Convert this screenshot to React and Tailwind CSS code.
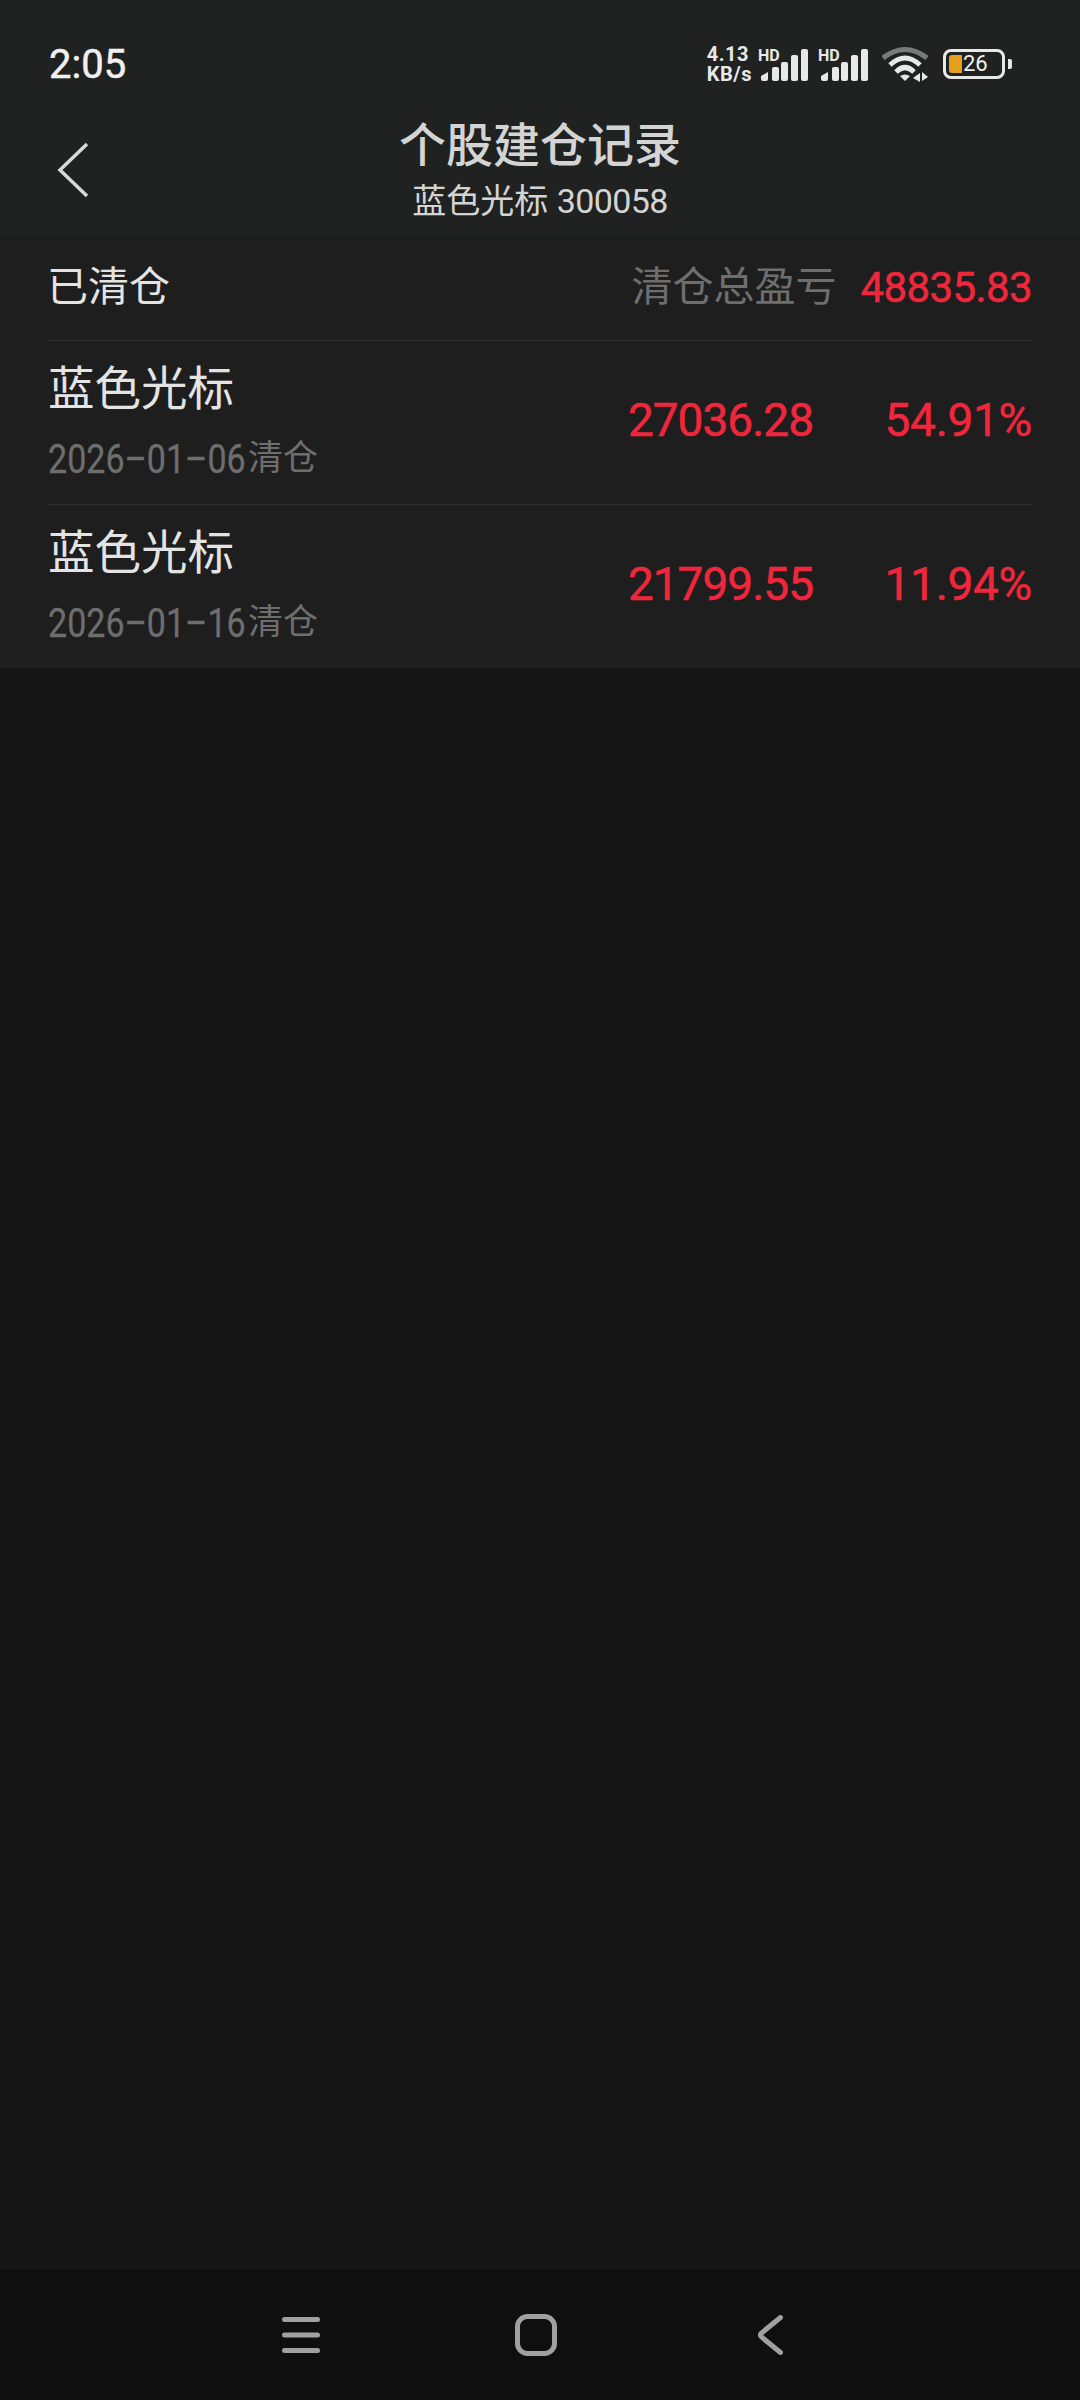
import React from 'react';

function Signal() {
  return (
    <svg width="50" height="36" viewBox="0 0 50 36" className="block">
      <text x="0" y="15" fontSize="16" fontWeight="700" fill="#e8e8e8" fontFamily="Roboto, sans-serif">HD</text>
      <g fill="#e8e8e8">
        <path d="M3 33V30L10 26V33Q10 35 8 35H5Q3 35 3 33Z" />
        <rect x="14" y="21" width="7" height="14" rx="2" />
        <rect x="23" y="16" width="7" height="19" rx="2" />
        <rect x="33" y="9" width="7" height="26" rx="2" />
        <rect x="43" y="3" width="7" height="32" rx="2" />
      </g>
    </svg>
  );
}

function Wifi() {
  return (
    <svg width="46" height="36" viewBox="0 0 46 36" fill="none" className="block">
      <path d="M1 12Q23 -5 45 12" stroke="#7a7a7a" strokeWidth="5" />
      <path d="M8 19Q23 5 38 19" stroke="#e8e8e8" strokeWidth="5" />
      <path d="M14 26Q23 17 32 26" stroke="#e8e8e8" strokeWidth="5" />
      <path d="M18 30Q23 27 28 30L23 35Z" fill="#e8e8e8" />
      <path d="M38 27V36L31 32Z" fill="#e8e8e8" />
      <path d="M40 26V35L46 31Z" fill="#e8e8e8" />
    </svg>
  );
}

function Battery() {
  return (
    <div className="flex items-center gap-[3px]">
      <div className="flex h-[30px] w-[62px] items-center rounded-[8px] border-[3px] border-[#e8e8e8] pl-[3px]">
        <div className="h-[18px] w-[13px] rounded-l-[3px] bg-[#e5a020]" />
        <span className="ml-[1px] text-[22px] leading-none text-[#f0f0f0]">26</span>
      </div>
      <div className="h-[10px] w-[4px] rounded-r-[2px] bg-[#e8e8e8]" />
    </div>
  );
}

function Row({ date, amount, percent }) {
  return (
    <div className="mx-[48px] flex h-[164px] items-center border-t border-[#2e2e2e]">
      <div className="flex flex-col pb-[3px]">
        <span className="text-[46.5px] leading-[56px] text-[#e4e4e4]">蓝色光标</span>
        <span className="mt-[20px] flex items-center text-[35px] leading-[44px] text-[#6e6e6e]">
          <span className="inline-block w-[200px] origin-left scale-x-[0.83] text-[41px] whitespace-nowrap [-webkit-text-stroke:0.3px_#6e6e6e]">{date}</span>
          清仓
        </span>
      </div>
      <span className="mb-[5px] ml-auto text-[46px] leading-none tracking-[-1px] text-[#f0273c] [-webkit-text-stroke:0.5px_#f0273c]">{amount}</span>
      <span className="mb-[5px] w-[219px] text-right text-[46px] leading-none tracking-[-0.3px] text-[#f0273c] [-webkit-text-stroke:0.5px_#f0273c]">{percent}</span>
    </div>
  );
}

export default function App() {
  return (
    <div className="flex h-[2400px] w-[1080px] flex-col overflow-hidden bg-[#161616] [font-family:Roboto,'Noto_Sans_CJK_SC',sans-serif]">
      <div className="h-[235px] bg-[#202222]">
        <div className="flex h-[100px] items-center pt-[28px] pr-[68px] pl-[49px]">
          <span className="mt-[2px] text-[40px] leading-none text-[#f0f0f0] [-webkit-text-stroke:0.5px_#f0f0f0]">2:05</span>
          <div className="ml-auto flex items-center">
            <div className="flex flex-col text-[20px] leading-[20px] font-bold tracking-[0.5px] text-[#e8e8e8]">
              <span>4.13</span>
              <span>KB/s</span>
            </div>
            <div className="ml-[6px] flex gap-[10px]">
              <Signal />
              <Signal />
            </div>
            <div className="mr-[15px] ml-[14px]">
              <Wifi />
            </div>
            <Battery />
          </div>
        </div>
        <div className="relative flex h-[135px] flex-col items-center pt-[17px]">
          <svg width="32" height="56" viewBox="0 0 32 56" fill="none" className="absolute top-[42px] left-[57px]">
            <path d="M30 2L3 28L30 54" stroke="#d8d8d8" strokeWidth="3.5" />
          </svg>
          <span className="text-[47px] leading-[58px] font-medium text-[#d4d4d4]">个股建仓记录</span>
          <span className="mt-[4px] text-[34px] leading-[44px] text-[#d4d4d4]">
            蓝色光标 <span className="tracking-[-0.6px]">300058</span>
          </span>
        </div>
      </div>

      <div className="h-[433px] bg-[#1e1e1e]">
        <div className="mx-[48px] flex h-[105px] items-center">
          <span className="-ml-[1px] text-[41px] leading-none text-[#e4e4e4]">已清仓</span>
          <span className="ml-auto text-[41px] leading-none text-[#6e6e6e]">清仓总盈亏</span>
          <span className="ml-[24px] text-[42px] leading-none tracking-[-0.6px] text-[#f0273c] [-webkit-text-stroke:0.5px_#f0273c]">48835.83</span>
        </div>
        <Row date="2026–01–06" amount="27036.28" percent="54.91%" />
        <Row date="2026–01–16" amount="21799.55" percent="11.94%" />
      </div>

      <div className="flex-1" />

      <div className="flex h-[130px] items-center bg-[#0f0f0f] pl-[282px]">
        <svg width="38" height="36" viewBox="0 0 38 36" fill="#a0a0a0" className="block">
          <rect x="0" y="0" width="38" height="5" rx="2.5" />
          <rect x="0" y="15.5" width="38" height="5" rx="2.5" />
          <rect x="0" y="31" width="38" height="5" rx="2.5" />
        </svg>
        <svg width="42" height="42" viewBox="0 0 42 42" fill="none" className="ml-[195px] block">
          <rect x="2.5" y="2.5" width="37" height="37" rx="10" stroke="#a0a0a0" strokeWidth="5" />
        </svg>
        <svg width="25" height="40" viewBox="0 0 25 40" fill="none" className="ml-[201px] block">
          <path d="M22.5 2.5L3.5 18Q1.5 20 3.5 22L22.5 37.5" stroke="#a0a0a0" strokeWidth="5" strokeLinecap="round" />
        </svg>
      </div>
    </div>
  );
}
